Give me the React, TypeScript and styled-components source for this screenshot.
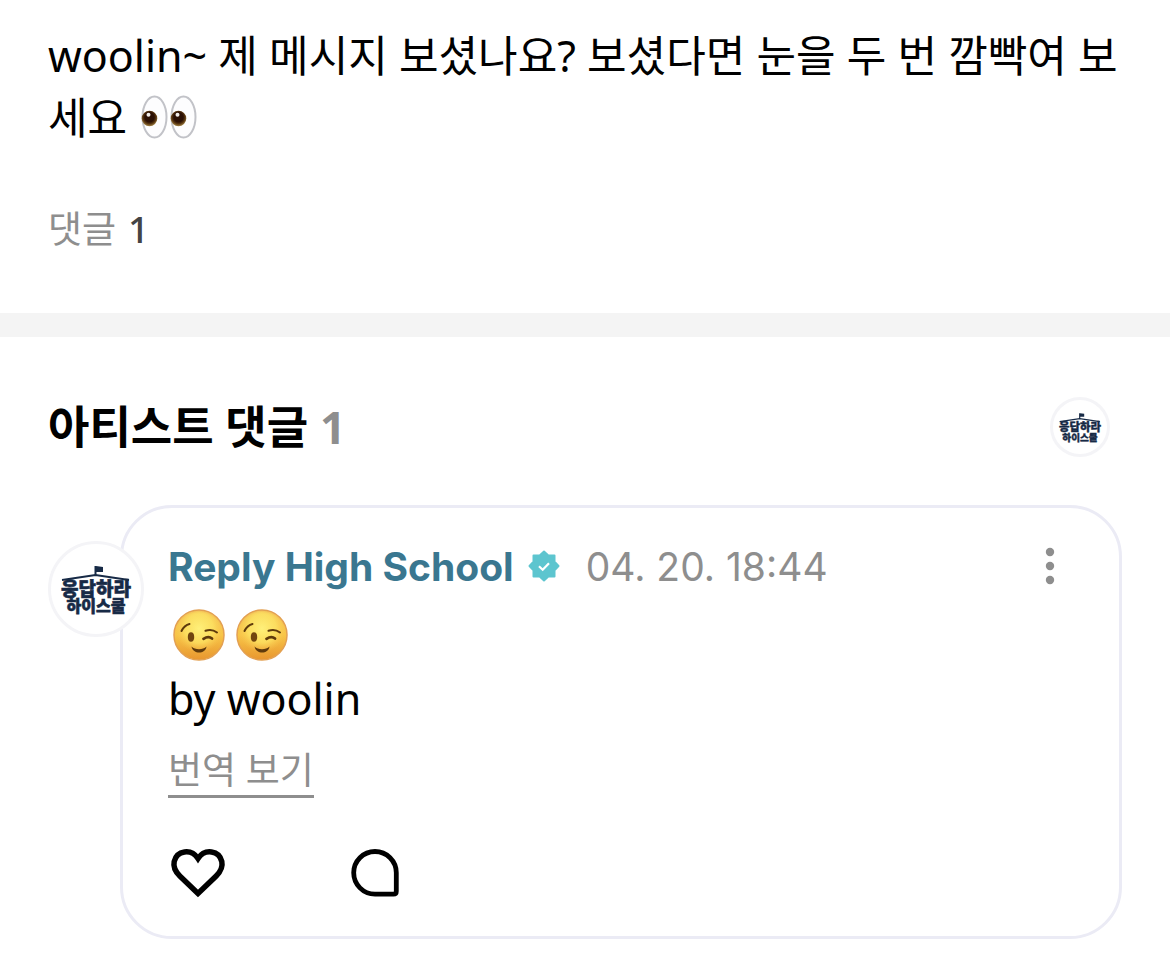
import React from "react";
import styled, { createGlobalStyle } from "styled-components";

const GlobalStyle = createGlobalStyle`
  *, *::before, *::after { box-sizing: border-box; }
  body {
    margin: 0;
    background: #fff;
    color: #000;
    font-family: "Noto Sans", "Noto Sans CJK KR", sans-serif;
  }
  h2, p { margin: 0; }
  button {
    padding: 0;
    border: 0;
    background: none;
    color: inherit;
    font: inherit;
    cursor: pointer;
  }
  svg { display: block; }
`;

const Post = styled.section`
  padding: 25px 48px 58px;
  border-bottom: 24px solid #f4f4f4;
`;

const BodyText = styled.p`
  font-size: 43px;
  line-height: 62px;
`;

const InlineEmoji = styled.span`
  display: inline-block;
  vertical-align: -5px;
  margin: 0 3px;
`;

const CommentCount = styled.p`
  display: flex;
  gap: 12px;
  margin-top: 53px;
  color: #8e8e8e;
  font-size: 37px;
  line-height: 53px;
`;

const CountValue = styled.span`
  color: #444;
  font-weight: 500;
`;

const Comments = styled.section`
  padding: 60px 48px 28px;
`;

const CommentsHeader = styled.header`
  display: flex;
  align-items: center;
  justify-content: space-between;
  padding-right: 12px;
`;

const Title = styled.h2`
  display: flex;
  gap: 12px;
  font-size: 45px;
  font-weight: 700;
  line-height: 60px;
`;

const TitleCount = styled.span`
  color: #8e8e8e;
`;

const Avatar = styled.span<{ $size: number }>`
  display: block;
  flex: none;
  width: ${(p) => p.$size}px;
  height: ${(p) => p.$size}px;
  border: 3px solid #f4f4f7;
  border-radius: 50%;
  background: #fff;
  overflow: hidden;
`;

const CommentRow = styled.article`
  position: relative;
  margin-top: 48px;
  padding-left: 72px;
`;

const AvatarSlot = styled.div`
  position: absolute;
  top: 36px;
  left: 0;
`;

const Card = styled.div`
  padding: 32px 63px 35px 45px;
  border: 3px solid #ebebf5;
  border-radius: 52px;
`;

const Meta = styled.div`
  display: flex;
  align-items: center;
  height: 52px;
  font-family: Inter, sans-serif;
  font-size: 39px;
`;

const Author = styled.span`
  color: #3a7790;
  font-weight: 700;
`;

const Badge = styled.span`
  margin: 0 26px 0 14px;
`;

const Time = styled.time`
  color: #8e8e8e;
`;

const MoreButton = styled.button`
  margin-left: auto;
`;

const EmojiLine = styled.div`
  display: flex;
  align-items: center;
  gap: 11px;
  height: 66px;
  margin-top: 10px;
  padding: 0 5px;
`;

const TranslateButton = styled.button`
  margin-top: 15px;
  border-bottom: 3px solid #8e8e8e;
  color: #8e8e8e;
  font-size: 37px;
  line-height: 50px;
`;

const Actions = styled.div`
  display: flex;
  gap: 120px;
  margin-top: 47px;
`;

function SchoolLogo() {
  return (
    <svg viewBox="0 0 90 90" width="100%" height="100%" role="img" aria-label="응답하라 하이스쿨">
      <g fill="#172a46" stroke="#172a46">
        <path d="M43.500 22H45L52 23V28H45.500V31.500H43.500Z" strokeWidth="0" />
        <path d="M11 36 44.500 31 78 36" fill="none" strokeWidth="1.800" />
        <g
          fontFamily="Noto Sans CJK KR, sans-serif"
          fontWeight="900"
          strokeWidth="0.600"
          textAnchor="middle"
        >
          <text x="45" y="52" fontSize="19">응답하라</text>
          <text x="45" y="68" fontSize="16">하이스쿨</text>
        </g>
      </g>
    </svg>
  );
}

function Eyes() {
  return (
    <svg width="56" height="44" viewBox="0 0 56 44" role="img" aria-label="👀">
      <defs>
        <radialGradient id="iris" cx="0.5" cy="0.42" r="0.6">
          <stop offset="0.5" stopColor="#2b1004" />
          <stop offset="0.7" stopColor="#573510" />
          <stop offset="1" stopColor="#b0914f" />
        </radialGradient>
      </defs>
      {[0, 29].map((x) => (
        <g key={x} transform={`translate(${x} 0)`}>
          <ellipse cx="13.5" cy="22" rx="12" ry="20.5" fill="#fdfdfe" stroke="#c2c3c8" strokeWidth="2" />
          <circle cx="8.5" cy="23.5" r="7.8" fill="url(#iris)" />
          <circle cx="7.5" cy="19.8" r="2" fill="#f2eeea" />
        </g>
      ))}
    </svg>
  );
}

function Wink() {
  return (
    <svg width="52" height="52" viewBox="0 0 52 52" role="img" aria-label="😉">
      <defs>
        <linearGradient id="face" x1="0" y1="0" x2="0" y2="1">
          <stop offset="0" stopColor="#f5c95c" />
          <stop offset="0.5" stopColor="#f8c548" />
          <stop offset="1" stopColor="#e8962f" />
        </linearGradient>
        <radialGradient id="glow" cx="0.5" cy="0.36" r="0.52">
          <stop offset="0" stopColor="#fff07a" />
          <stop offset="0.6" stopColor="#fde564" stopOpacity="0.75" />
          <stop offset="1" stopColor="#f9c94f" stopOpacity="0" />
        </radialGradient>
      </defs>
      <circle cx="26" cy="26" r="25" fill="url(#face)" stroke="#e3a052" strokeWidth="1.5" />
      <circle cx="26" cy="26" r="23" fill="url(#glow)" />
      <g fill="none" stroke="#5f3a0c" strokeWidth="2" strokeLinecap="round">
        <path d="M8.500 22C10.500 18 13 15.800 16.500 15" />
        <path d="M32.500 21.800C36.500 20.300 40.500 20.800 44 23.500" />
        <path d="M30.500 29.800C33.500 27.800 37 27.800 39 29.500" strokeWidth="2.800" />
      </g>
      <ellipse cx="18" cy="28" rx="3.200" ry="4.800" fill="#71450f" />
      <path d="M18.500 37.500C22 41 30 41 33.500 37.500C32.500 45.500 20 45.500 18.500 37.500Z" fill="#5f3a0c" />
    </svg>
  );
}

function VerifiedIcon() {
  return (
    <svg width="32" height="32" viewBox="0 0 32 32" role="img" aria-label="인증됨">
      <path
        d="M16 1.500 20.300 5.500H26.500V11.700L30.500 16 26.500 20.300V26.500H20.300L16 30.500 11.700 26.500H5.500V20.300L1.500 16 5.500 11.700V5.500H11.700Z"
        fill="#5dc5cf"
        stroke="#5dc5cf"
        strokeWidth="2"
        strokeLinejoin="round"
      />
      <path d="m11 16.300 3.700 3.500 6.300-6.600" fill="none" stroke="#fff" strokeWidth="2.200" />
    </svg>
  );
}

function MoreIcon() {
  return (
    <svg width="12" height="40" viewBox="0 0 12 40" fill="#8e8e8e">
      <circle cx="6" cy="6" r="4.200" />
      <circle cx="6" cy="20" r="4.200" />
      <circle cx="6" cy="34" r="4.200" />
    </svg>
  );
}

function HeartIcon() {
  return (
    <svg width="60" height="56" viewBox="0 0 60 56" fill="none" stroke="#000" strokeWidth="5.500">
      <path d="M30 48.500 11.800 31C6.800 26 5 22 6.200 16.500C8.800 5.500 23 3 30 13.500C37 3 51.200 5.500 53.800 16.500C55 22 53.200 26 48.200 31Z" />
    </svg>
  );
}

function ReplyIcon() {
  return (
    <svg width="54" height="56" viewBox="0 0 54 56" fill="none" stroke="#000" strokeWidth="4.800">
      <path d="M27 6.500A21.300 21.300 0 0 0 27 49.100H45.500Q48.300 49.100 48.300 46.300V27.800A21.300 21.300 0 0 0 27 6.500Z" />
    </svg>
  );
}

export default function App() {
  return (
    <>
      <GlobalStyle />
      <main>
        <Post>
          <BodyText>
            woolin~ 제 메시지 보셨나요? 보셨다면 눈을 두 번 깜빡여 보세요{" "}
            <InlineEmoji>
              <Eyes />
            </InlineEmoji>
          </BodyText>
          <CommentCount>
            댓글 <CountValue>1</CountValue>
          </CommentCount>
        </Post>
        <Comments>
          <CommentsHeader>
            <Title>
              아티스트 댓글 <TitleCount>1</TitleCount>
            </Title>
            <Avatar $size={60}>
              <SchoolLogo />
            </Avatar>
          </CommentsHeader>
          <CommentRow>
            <Card>
              <Meta>
                <Author>Reply High School</Author>
                <Badge>
                  <VerifiedIcon />
                </Badge>
                <Time>04. 20. 18:44</Time>
                <MoreButton type="button" aria-label="더보기">
                  <MoreIcon />
                </MoreButton>
              </Meta>
              <EmojiLine>
                <Wink />
                <Wink />
              </EmojiLine>
              <BodyText>by woolin</BodyText>
              <TranslateButton type="button">번역 보기</TranslateButton>
              <Actions>
                <button type="button" aria-label="좋아요">
                  <HeartIcon />
                </button>
                <button type="button" aria-label="답글">
                  <ReplyIcon />
                </button>
              </Actions>
            </Card>
            <AvatarSlot>
              <Avatar $size={96}>
                <SchoolLogo />
              </Avatar>
            </AvatarSlot>
          </CommentRow>
        </Comments>
      </main>
    </>
  );
}
